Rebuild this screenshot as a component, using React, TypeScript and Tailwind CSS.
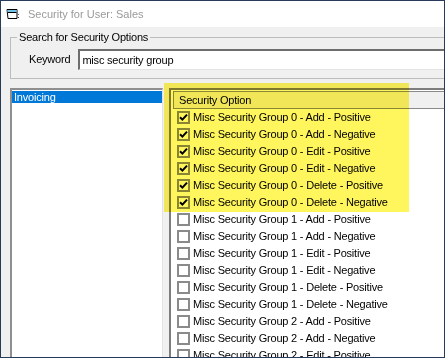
import React from 'react';

type Row = { label: string; checked: boolean };

const groups = [0, 1, 2];
const actions = ['Add', 'Edit', 'Delete'];
const kinds = ['Positive', 'Negative'];

const rows: Row[] = [];
groups.forEach((g) => {
  actions.forEach((a) => {
    kinds.forEach((k) => {
      rows.push({ label: `Misc Security Group ${g} - ${a} - ${k}`, checked: g === 0 });
    });
  });
});

const WindowIcon = () => (
  <svg width="14" height="12" viewBox="0 0 14 12" className="shrink-0">
    <path d="M1 1.5 L11 1.5 L11 10.5 L2 10.5 Z" fill="#ffffff" stroke="#000" strokeWidth="1" />
    <rect x="1.5" y="2" width="9" height="2.5" fill="#6fc3e8" />
    <path d="M1 1.5 L11 1.5" stroke="#000" strokeWidth="1" />
    <path d="M1.5 4.5 L10.5 4.5" stroke="#000" strokeWidth="1" />
    <rect x="12" y="9" width="1" height="1" fill="#333" />
    <rect x="12" y="6" width="1" height="1" fill="#666" />
  </svg>
);

const CheckBox = ({ checked }: { checked: boolean }) => (
  <div className="w-[13px] h-[13px] border-2 border-[#8a8a8a] bg-white flex items-center justify-center shrink-0">
    {checked && (
      <svg width="9" height="9" viewBox="0 0 9 9">
        <path d="M1 4.2 L3.4 6.6 L8 1.6" fill="none" stroke="#000" strokeWidth="2" />
      </svg>
    )}
  </div>
);

export default function App() {
  return (
    <div className="relative w-[445px] h-[358px] overflow-hidden border border-[#283b5b] bg-[#f0f0f0] flex flex-col font-['Liberation_Sans',Arial,sans-serif] text-[11px] text-black">
      {/* Title bar */}
      <div className="h-[26px] bg-white flex items-center pl-[5px] gap-[8px] shrink-0">
        <WindowIcon />
        <span className="text-[#9a9a9a] text-[11px]">Security for User: Sales</span>
      </div>

      {/* Search group */}
      <fieldset className="mt-[3px] ml-[9px] w-[470px] border border-[#bdbdbd] pl-[6px] pt-[5px] pb-[8px] shrink-0">
        <legend className="px-[2px] leading-[14px] tracking-[-0.2px]">Search for Security Options</legend>
        <div className="flex items-center gap-[8px] ml-[12px]">
          <span className="tracking-[-0.2px]">Keyword</span>
          <div className="h-[21px] flex-1 bg-white border-t-2 border-l-2 border-t-[#6e6e6e] border-l-[#6e6e6e] border-b border-b-[#e3e3e3] flex items-center pl-[2px] tracking-[-0.2px]">
            misc security group
          </div>
        </div>
      </fieldset>

      {/* Main area */}
      <div className="flex-1 flex mt-[9px] pl-[9px] gap-[6px] min-h-0">
        {/* Left list */}
        <div className="w-[153px] bg-white border-t-2 border-l-2 border-[#8f8f8f] border-r border-r-[#e3e3e3] pt-[1px]">
          <div className="h-[12px] bg-[#0078d7] text-white leading-[12px] pl-[2px] tracking-[-0.2px]">Invoicing</div>
        </div>

        {/* Right list view */}
        <div className="flex-1 bg-white border-t-2 border-l-2 border-[#7d7d7d] min-w-0 overflow-hidden">
          <div className="mt-[1px] ml-[2px] h-[18px] bg-[#f0f0f0] border-t border-l border-b border-[#8a8a8a] flex items-center pl-[5px] tracking-[-0.2px]">
            Security Option
          </div>
          <div className="flex flex-col">
            {rows.map((r) => (
              <div key={r.label} className="h-[17px] flex items-center pl-[6px] gap-[3px] whitespace-nowrap tracking-[-0.2px]">
                <CheckBox checked={r.checked} />
                <span>{r.label}</span>
              </div>
            ))}
          </div>
        </div>
      </div>

      {/* Highlighter overlay */}
      <div className="absolute left-[163px] top-[82px] w-[245px] h-[129px] bg-[#fff55c] mix-blend-multiply pointer-events-none" />
    </div>
  );
}
